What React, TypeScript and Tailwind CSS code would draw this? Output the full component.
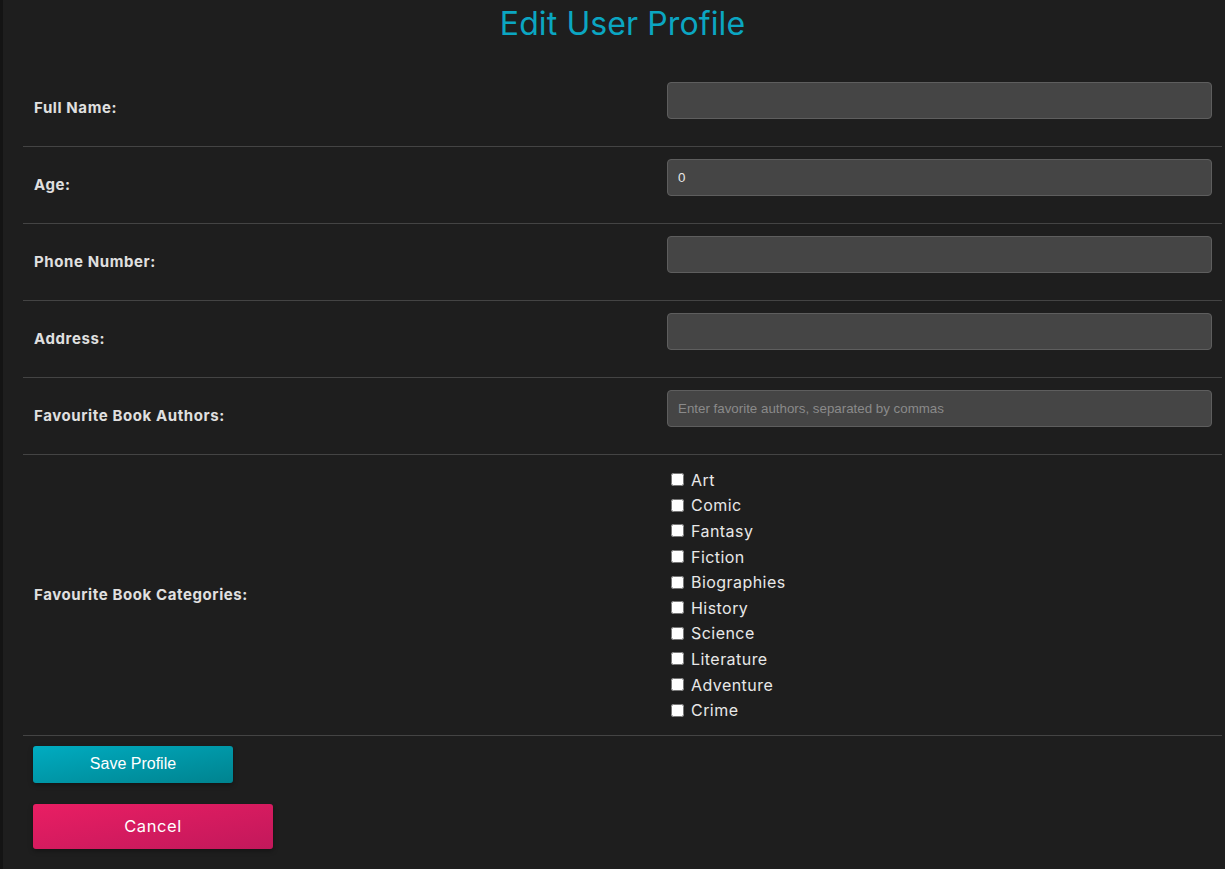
import React from 'react';

const textFields = [
  { label: 'Full Name:', value: '', placeholder: '' },
  { label: 'Age:', value: '0', placeholder: '' },
  { label: 'Phone Number:', value: '', placeholder: '' },
  { label: 'Address:', value: '', placeholder: '' },
  { label: 'Favourite Book Authors:', value: '', placeholder: 'Enter favorite authors, separated by commas' },
];

const categories = [
  'Art',
  'Comic',
  'Fantasy',
  'Fiction',
  'Biographies',
  'History',
  'Science',
  'Literature',
  'Adventure',
  'Crime',
];

const sans = "font-['Inter','Noto_Sans',sans-serif]";

const App: React.FC = () => {
  return (
    <div className="min-h-[869px] bg-[#1e1e1e] border-l-[3px] border-[#141414] pl-[20px] pr-[3px]">
      <h1 className={`h-[70px] pt-[3px] text-center text-[32px] leading-[42px] tracking-[0.1px] text-[#0ba6c2] ${sans}`}>
        Edit User Profile
      </h1>

      <div>
        {textFields.map(field => (
          <div key={field.label} className="flex border-b border-[#444]">
            <div className={`w-[634px] flex items-center pl-[11px] text-[15px] tracking-[0.6px] font-bold text-[#e0e0e0] ${sans}`}>
              {field.label}
            </div>
            <div className="flex-1 pt-[12px] pb-[27px] pl-[10px] pr-[10px]">
              <input
                type="text"
                defaultValue={field.value}
                placeholder={field.placeholder}
                className="block w-full h-[37px] rounded-[4px] border border-[#5e5e5e] bg-[#454545] px-[10px] text-[13.33px] text-[#e8e8e8] placeholder:text-[#8a8a8a] font-['Liberation_Sans',Arial,sans-serif] outline-none"
              />
            </div>
          </div>
        ))}

        <div className="flex border-b border-[#444]">
          <div className={`w-[634px] flex items-center pl-[11px] text-[15px] tracking-[0.6px] font-bold text-[#e0e0e0] ${sans}`}>
            Favourite Book Categories:
          </div>
          <div className="flex-1 py-[12px] px-[10px]">
            {categories.map(cat => (
              <label key={cat} className={`flex items-center h-[25.6px] text-[16px] tracking-[0.45px] text-[#e8e8e8] ${sans}`}>
                <input type="checkbox" className="ml-[4px] mr-[7px] w-[13px] h-[13px]" />
                {cat}
              </label>
            ))}
          </div>
        </div>
      </div>

      <div className="pl-[10px] pt-[10px]">
        <button className="block w-[200px] h-[37px] rounded-[3px] bg-gradient-to-br from-[#00acc1] to-[#00838f] text-white text-[16px] font-['Liberation_Sans',Arial,sans-serif] shadow-[0_2px_5px_rgba(0,0,0,0.35)]">
          Save Profile
        </button>
        <button className={`block mt-[21px] w-[240px] h-[45px] rounded-[3px] bg-gradient-to-br from-[#e91e63] to-[#c2185b] text-white text-[16.5px] tracking-[0.6px] shadow-[0_2px_5px_rgba(0,0,0,0.35)] ${sans}`}>
          Cancel
        </button>
      </div>
    </div>
  );
};

export default App;
